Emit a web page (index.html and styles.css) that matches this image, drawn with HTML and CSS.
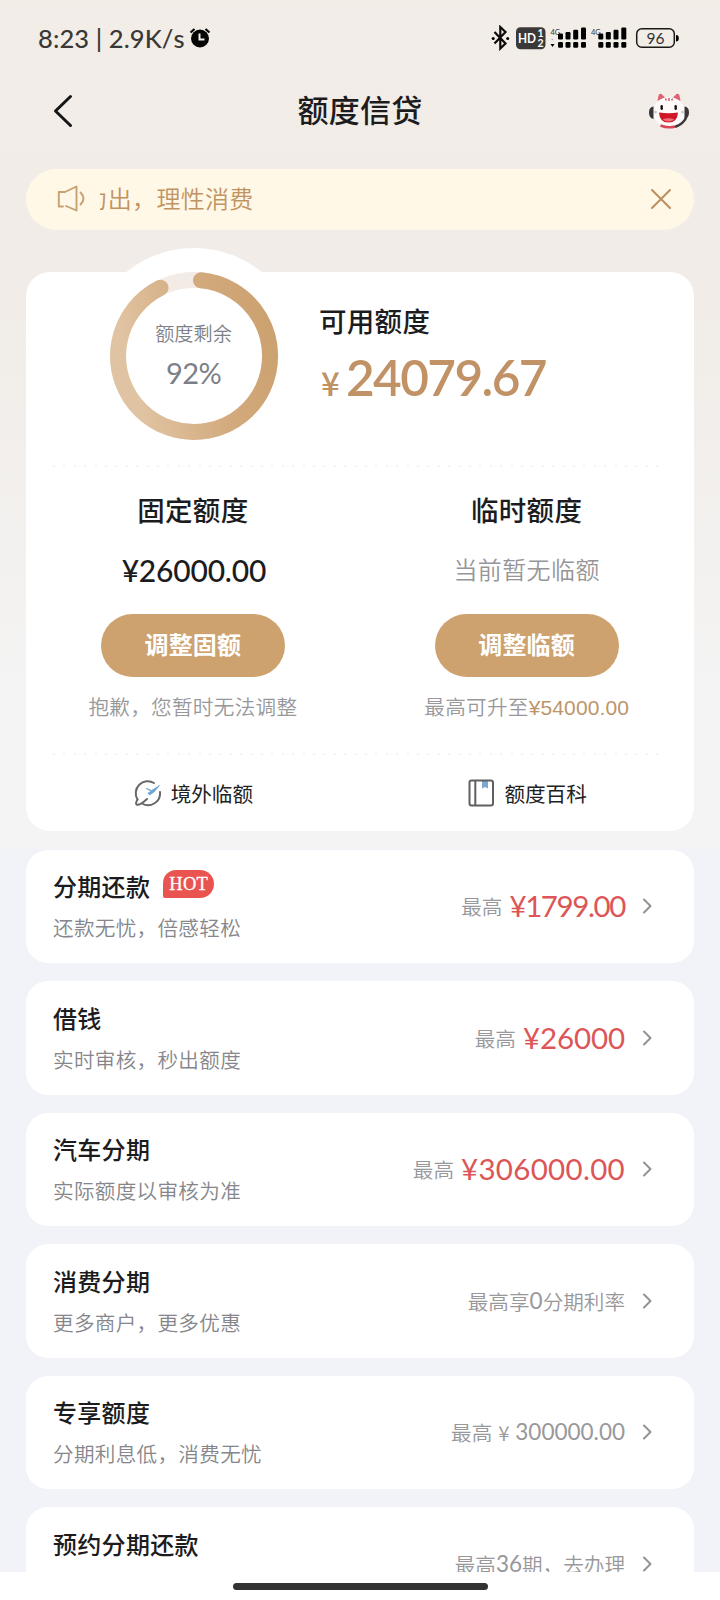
FILE: index.html
```html
<!DOCTYPE html>
<html lang="zh-CN">
<head>
<meta charset="utf-8">
<title>额度信贷</title>
<link rel="stylesheet" href="styles.css">
</head>
<body>
<div class="screen">
  <div class="statusbar">
    <span class="clock">8:23 | 2.9K/s</span>
    <svg class="alarm" width="22" height="22" viewBox="0 0 22 22">
      <circle cx="11" cy="11.500" r="9" fill="#050505"/>
      <path d="M1.500 5.500 5.500 2M20.500 5.500 16.500 2" stroke="#050505" stroke-width="2.200" fill="none"/>
      <path d="M10.500 6.500V12.500H15.500" stroke="#f2ede7" stroke-width="2" fill="none"/>
    </svg>
    <svg class="indicators" width="190" height="26" viewBox="490 25 190 26">
      <path d="M494.500 32 505.500 43.500 500.300 48.500V27L505.500 32 494.500 43.500" fill="none" stroke="#0c0b0a" stroke-width="2.200"/>
      <circle cx="493.200" cy="38.500" r="1.500"/><circle cx="507.700" cy="38.500" r="1.500"/>
      <rect x="516" y="27.300" width="29.500" height="22" rx="4.500" fill="#3b3937"/>
      <text class="hd" x="518" y="42.600" textLength="18" lengthAdjust="spacingAndGlyphs">HD</text>
      <text class="hd-sub" x="537.500" y="37.200">1</text>
      <text class="hd-sub" x="537.500" y="47.300">2</text>
      <text class="net" x="550.500" y="35">4G</text>
      <circle cx="552.300" cy="39.500" r=".8" fill="#aaa"/><path d="M550.500 44h4l-2 3z"/>
      <g id="signal">
        <rect x="558" y="33.500" width="5" height="6" rx="1.200"/><rect x="565.500" y="32" width="5" height="7.500" rx="1.200"/><rect x="573.200" y="29.800" width="5" height="9.700" rx="1.200"/><rect x="581" y="27.500" width="5" height="12" rx="1.200"/>
        <rect x="558" y="42" width="5" height="5.800" rx="1.200"/><rect x="565.500" y="42" width="5" height="5.800" rx="1.200"/><rect x="573.200" y="42" width="5" height="5.800" rx="1.200"/><rect x="581" y="42" width="5" height="5.800" rx="1.200"/>
      </g>
      <text class="net" x="591" y="35">4G</text>
      <use href="#signal" x="40.300"/>
      <rect x="636.700" y="28.700" width="37.600" height="18.600" rx="5" fill="none" stroke="#1b1a19" stroke-width="1.500"/>
      <path d="M676 35q2.800 0 2.800 3.300t-2.800 3.300z"/>
      <text class="battery" x="655.500" y="43.800" text-anchor="middle">96</text>
    </svg>
  </div>

  <header class="header">
    <svg class="back" width="22" height="34" viewBox="0 0 22 34"><path d="M18.500 2.500 3.500 17 18.500 31.500" fill="none" stroke="#151515" stroke-width="3" stroke-linecap="round" stroke-linejoin="round"/></svg>
    <h1 class="title">额度信贷</h1>
    <svg class="avatar" width="42" height="38" viewBox="0 0 42 38">
      <path d="M9.500 9 10.500 3.500Q11 1.300 13.500 2L17 5.500zM32.500 9 31.500 3.500Q31 1.300 28.500 2L25 5.500z" fill="#dd6373"/>
      <ellipse cx="21" cy="20" rx="15.800" ry="14.800" fill="#fffafa"/>
      <path d="M12.500 33.500Q20 36.500 27 34.500" stroke="#d84758" stroke-width="2.500" fill="none"/>
      <path d="M17.500 6.500l.8 2M21 6v3M24.500 6.500l-.8 2" stroke="#c9555f" stroke-width="1.400"/>
      <rect x="12.500" y="13" width="2.400" height="5" rx="1.200" fill="#171315"/><rect x="26.500" y="13" width="2.400" height="5" rx="1.200" fill="#171315"/>
      <path d="M11 20.500Q20.500 22 30 20.500 29.500 30.500 20.500 30.500T11 20.500z" fill="#cf1728"/>
      <path d="M14.500 27.500q6-2.500 12 0-6 4-12 0z" fill="#f3707b"/>
      <path d="M5.500 14.500Q1 15 1 20.500t4.500 6.500zM36.500 14.500Q41 15 41 20.500t-4.500 6.500z" fill="#39373a"/>
      <path d="M38 26Q35 32 28 34.500" fill="none" stroke="#39373a" stroke-width="2.500" stroke-linecap="round"/>
      <circle cx="7.500" cy="20" r="1.500" fill="#ccc"/><circle cx="34.500" cy="20" r="1.500" fill="#ccc"/>
    </svg>
  </header>

  <section class="notice">
    <svg class="speaker" width="30" height="28" viewBox="0 0 30 28" fill="none" stroke="#c6a071" stroke-width="1.900" stroke-linecap="round" stroke-linejoin="round">
      <path d="M6 21.500H1.800V7H8L19.500 1.500V25.500L9 21"/><path d="M23.500 7.500Q29.500 13.500 23.500 19.500"/>
    </svg>
    <div class="marquee"><span class="marquee-text">为出，理性消费</span></div>
    <svg class="close" width="22" height="22" viewBox="0 0 22 22"><path d="M2 2 20 20M20 2 2 20" stroke="#bc8e5d" stroke-width="2" stroke-linecap="round"/></svg>
  </section>

  <section class="card">
    <div class="summary">
      <div class="gauge">
        <svg class="ring" width="216" height="216" viewBox="0 0 216 216">
          <defs><linearGradient id="gold" x1="1" y1="0" x2="0" y2=".25"><stop offset="0" stop-color="#cba06e"/><stop offset=".5" stop-color="#d3ab7e"/><stop offset="1" stop-color="#e0c3a2"/></linearGradient></defs>
          <circle cx="108" cy="108" r="108" fill="#fff"/>
          <circle cx="108" cy="108" r="76" fill="none" stroke="#f3ebe5" stroke-width="16"/>
          <path d="M115 32.300A76 76 0 1 1 74.500 39.800" fill="none" stroke="url(#gold)" stroke-width="16" stroke-linecap="round"/>
        </svg>
        <div class="gauge-label"><span class="gauge-name">额度剩余</span><span class="gauge-value">92%</span></div>
      </div>
      <div class="available">
        <h2 class="heading">可用额度</h2>
        <div class="available-value"><span class="yen">¥</span><span class="big">24079.67</span></div>
      </div>
    </div>
    <div class="dots"></div>
    <div class="limits">
      <div class="limit">
        <h2 class="heading">固定额度</h2>
        <div class="limit-value">¥26000.00</div>
        <button class="pill">调整固额</button>
        <p class="hint">抱歉，您暂时无法调整</p>
      </div>
      <div class="limit">
        <h2 class="heading">临时额度</h2>
        <div class="limit-value none">当前暂无临额</div>
        <button class="pill">调整临额</button>
        <p class="hint">最高可升至<span class="gold">¥54000.00</span></p>
      </div>
    </div>
    <div class="dots"></div>
    <div class="links">
      <a class="link">
        <svg width="28" height="28" viewBox="0 0 28 28" fill="none" stroke="#686868" stroke-width="2" stroke-linecap="round">
          <path d="M20 4A12 12 0 0 0 3.500 20.500"/><path d="M26 13A12 12 0 0 1 8 24.500"/><path d="M3.500 20.500Q1 24.500 2.800 25.800 6 26.500 13 20"/>
          <path d="M12.500 9.500 17.500 11.500 25.500 6.500 20 13 15.500 16 14 14 17 12.500z" fill="#70a4d2" stroke="#70a4d2" stroke-width=".8"/>
        </svg>
        <span>境外临额</span>
      </a>
      <a class="link">
        <svg width="28" height="28" viewBox="0 0 28 28" fill="none" stroke="#606060" stroke-width="2">
          <path d="M15 1.500h6V9.500l-3-1.500-3 1.500z" fill="#7ba7d3" stroke="none"/>
          <rect x="2.500" y="1.500" width="23.500" height="25" rx="2"/><path d="M8.300 1.500V26.500"/>
        </svg>
        <span>额度百科</span>
      </a>
    </div>
  </section>

  <main class="list">
    <article class="row">
      <div class="row-main"><h3 class="row-title">分期还款<span class="hot">HOT</span></h3><p class="row-sub">还款无忧，倍感轻松</p></div>
      <div class="row-side">最高<span class="red tight">¥1799.00</span></div>
      <svg class="chevron" width="10" height="16" viewBox="0 0 10 16"><path d="M2 1.500 8.500 8 2 14.500"/></svg>
    </article>
    <article class="row">
      <div class="row-main"><h3 class="row-title">借钱</h3><p class="row-sub">实时审核，秒出额度</p></div>
      <div class="row-side">最高<span class="red">¥26000</span></div>
      <svg class="chevron" width="10" height="16" viewBox="0 0 10 16"><path d="M2 1.500 8.500 8 2 14.500"/></svg>
    </article>
    <article class="row">
      <div class="row-main"><h3 class="row-title">汽车分期</h3><p class="row-sub">实际额度以审核为准</p></div>
      <div class="row-side">最高<span class="red wide">¥306000.00</span></div>
      <svg class="chevron" width="10" height="16" viewBox="0 0 10 16"><path d="M2 1.500 8.500 8 2 14.500"/></svg>
    </article>
    <article class="row">
      <div class="row-main"><h3 class="row-title">消费分期</h3><p class="row-sub">更多商户，更多优惠</p></div>
      <div class="row-side">最高享<span class="num">0</span>分期利率</div>
      <svg class="chevron" width="10" height="16" viewBox="0 0 10 16"><path d="M2 1.500 8.500 8 2 14.500"/></svg>
    </article>
    <article class="row">
      <div class="row-main"><h3 class="row-title">专享额度</h3><p class="row-sub">分期利息低，消费无忧</p></div>
      <div class="row-side">最高<span class="small-yen">¥</span><span class="num">300000.00</span></div>
      <svg class="chevron" width="10" height="16" viewBox="0 0 10 16"><path d="M2 1.500 8.500 8 2 14.500"/></svg>
    </article>
    <article class="row">
      <div class="row-main"><h3 class="row-title">预约分期还款</h3></div>
      <div class="row-side">最高<span class="num">36</span>期，去办理</div>
      <svg class="chevron" width="10" height="16" viewBox="0 0 10 16"><path d="M2 1.500 8.500 8 2 14.500"/></svg>
    </article>
  </main>
  <footer class="homebar"><div class="handle"></div></footer>
</div>
</body>
</html>
```
FILE: styles.css
```css
* { box-sizing: border-box; margin: 0; padding: 0; }
body { width: 720px; height: 1600px; overflow: hidden; font-family: "Noto Sans CJK SC", sans-serif; color: #1c1c1e; font-kerning: none; }
h1, h2, h3 { font-weight: 500; }
svg { display: block; flex: none; }

.screen {
  width: 720px; height: 1600px; display: flex; flex-direction: column;
  background: linear-gradient(#f2ede7 0, #f1ece7 300px, #f4f4f4 700px, #f4f4f4 848px, #f2f3f8 849px);
}

.statusbar { flex: none; height: 76px; display: flex; align-items: center; padding: 0 40px 0 38px; }
.clock { font: 500 25.500px/30px Lato, sans-serif; font-kerning: none; color: #3a3836; letter-spacing: .1px; width: 151px; white-space: nowrap; }
.indicators { margin-left: auto; }
.hd { font: 700 14px Lato, sans-serif; fill: #fff; }
.hd-sub { font: 700 10.500px Lato, sans-serif; fill: #fff; }
.net { font: 400 7.500px Lato, sans-serif; fill: #333; }
.battery { font: 400 15.500px Lato, sans-serif; fill: #333; }

.header { flex: none; height: 68px; display: flex; align-items: center; justify-content: space-between; padding: 1px 30px 0 52px; }
.title { font-size: 31px; line-height: 44px; letter-spacing: .3px; margin: -4px 2px 0 0; }

.notice { flex: none; height: 61px; margin: 25px 26px 0; padding: 0 22px 1px 31px; border-radius: 31px; background: #fff8e6; display: flex; align-items: center; }
.marquee { flex: 1; overflow: hidden; margin-left: 13px; }
.marquee-text { display: block; margin: -2px 0 0 -16.500px; font-size: 24px; line-height: 36px; letter-spacing: .3px; color: #c19362; white-space: nowrap; font-weight: 350; }

.card { flex: none; height: 559px; margin: 42px 26.500px 0 26px; background: #fff; border-radius: 24px; }
.summary { height: 193px; display: flex; }
.gauge { width: 216px; height: 216px; margin: -24.500px 0 0 59.500px; display: grid; }
.ring, .gauge-label { grid-area: 1 / 1; }
.gauge-label { display: flex; flex-direction: column; align-items: center; padding-top: 70px; color: #7d7f87; z-index: 1; }
.gauge-name { font-size: 19.200px; line-height: 30px; font-weight: 350; }
.gauge-value { font: 400 29px/36px Lato, sans-serif; margin-top: 7px; letter-spacing: -.6px; }
.available { padding: 28px 0 0 17.500px; }
.heading { font-size: 27.500px; line-height: 40px; letter-spacing: .3px; }
.available-value { display: flex; align-items: baseline; color: #c09265; line-height: 60px; margin-top: 7px; }
.yen { font-size: 33px; font-weight: 500; width: 23px; line-height: 60px; margin-left: 3px; text-indent: -1px; }
.big { font: 600 49.500px/60px Lato, sans-serif; font-kerning: none; letter-spacing: -1.600px; margin-left: 1px; }

.dots { height: 2px; margin: 0 27px; background: repeating-linear-gradient(90deg, #f4f4f5 0 2px, transparent 2px 10.400px); }
.limits { display: flex; height: 286px; }
.limit { flex: 1; display: flex; flex-direction: column; align-items: center; padding-top: 22px; }
.limit-value { height: 40px; margin-top: 21px; padding-left: 2px; font: 500 30px/40px Lato, sans-serif; font-kerning: none; letter-spacing: -.2px; }
.none { font: 350 24px/38px "Noto Sans CJK SC", sans-serif; letter-spacing: .4px; color: #969699; padding: 0; }
.pill { width: 184px; height: 63px; margin-top: 24px; padding-bottom: 3px; border: 0; border-radius: 32px; background: #cda26f; color: #fff; font: 700 24px/36px "Noto Sans CJK SC", sans-serif; letter-spacing: .2px; }
.hint { font-size: 20.600px; line-height: 30px; margin-top: 14px; letter-spacing: .3px; color: #98989b; font-weight: 350; white-space: nowrap; }
.gold { font-family: "Liberation Sans", sans-serif; font-weight: 400; font-size: 21px; letter-spacing: .1px; color: #bd956a; }
.links { display: flex; height: 76px; }
.link { flex: 1; display: flex; align-items: center; justify-content: center; gap: 9px; font-size: 20.600px; line-height: 30px; color: #222; padding-left: 1px; }
.link span { margin-top: -1px; }

.list { flex: none; height: 740.500px; overflow: hidden; padding-top: 18.500px; display: flex; flex-direction: column; gap: 18px; }
.row { flex: none; height: 113.500px; margin: 0 26px; padding: 0 42px 0 27px; background: #fff; border-radius: 22px; display: flex; align-items: center; }
.row-main { flex: 1; align-self: stretch; padding-top: 18.500px; }
.row-title { display: flex; align-items: center; font-size: 24px; line-height: 36px; letter-spacing: .3px; }
.hot { margin: -4px 0 0 13px; width: 51px; height: 28px; border-radius: 13px 14px 14px 2px; background: #ea5450; color: #fff; font: 400 18.500px/28px "Liberation Serif", serif; -webkit-text-stroke: .3px #fff; text-align: center; }
.row-sub { font-size: 20.600px; line-height: 30px; margin-top: 8px; letter-spacing: .3px; color: #85868b; font-weight: 350; }
.row-side { display: flex; align-items: center; font-size: 20.600px; line-height: 38px; color: #98989b; font-weight: 350; white-space: nowrap; }
.red { font: 400 29.500px/40px Lato, sans-serif; font-kerning: none; color: #dc5657; margin-left: 7px; letter-spacing: -.1px; }
.tight { letter-spacing: -1.400px; }
.wide { letter-spacing: .3px; }
.num { font: 400 22.500px/40px Lato, sans-serif; letter-spacing: 0; }
.small-yen { width: 23px; text-align: center; }
.chevron { margin-left: 17px; fill: none; stroke: #929296; stroke-width: 2; stroke-linecap: round; stroke-linejoin: round; }

.homebar { flex: 1; background: #fff; display: flex; justify-content: center; padding-top: 11px; }
.handle { width: 255px; height: 7px; border-radius: 4px; background: #333; }
```
